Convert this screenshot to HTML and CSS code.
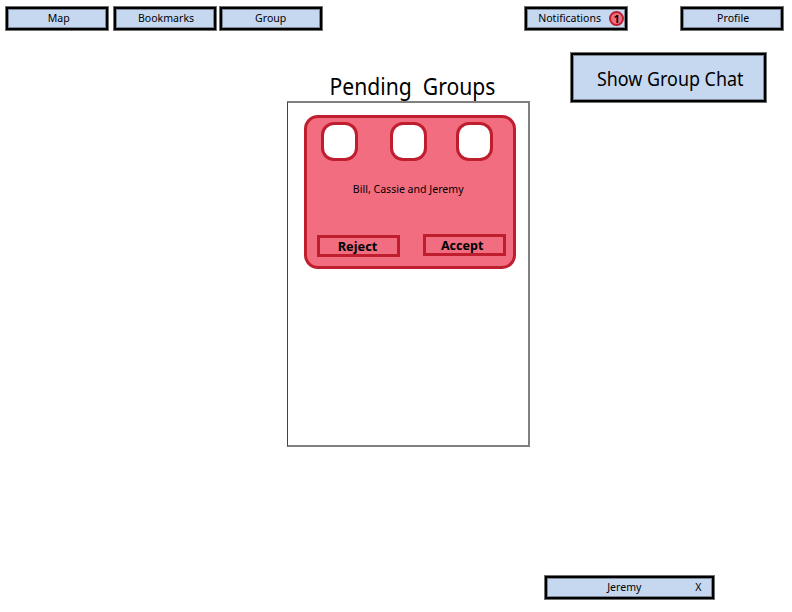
FILE: index.html
```html
<!DOCTYPE html>
<html lang="en">
<head>
<meta charset="utf-8">
<title>Pending Groups</title>
<link rel="stylesheet" href="styles.css">
</head>
<body>
<div class="screen">
  <nav class="nav">
    <button class="box tab map"><span>Map</span></button>
    <button class="box tab bookmarks"><span>Bookmarks</span></button>
    <button class="box tab group"><span>Group</span></button>
    <button class="box tab notifications"><span>Notifications</span><b class="badge">1</b></button>
    <button class="box tab profile"><span>Profile</span></button>
  </nav>
  <div class="main">
    <section class="pending">
      <h1><span>Pending&nbsp; Groups</span></h1>
      <div class="panel">
        <article class="card">
          <div class="avatars"><i class="avatar"></i><i class="avatar"></i><i class="avatar"></i></div>
          <p class="names"><span>Bill, Cassie and Jeremy</span></p>
          <div class="actions">
            <button class="action reject"><span>Reject</span></button>
            <button class="action accept"><span>Accept</span></button>
          </div>
        </article>
      </div>
    </section>
    <button class="box chat"><span>Show Group Chat</span></button>
  </div>
  <footer class="box tab dock"><span>Jeremy</span><span class="close">X</span></footer>
</div>
</body>
</html>
```
FILE: styles.css
```css
* { box-sizing: border-box; }
body { margin: 0; background: #fff; color: #000; font-family: "Noto Sans", sans-serif; }
button { font: inherit; color: inherit; padding: 0; margin: 0; }
span { display: inline-block; }
.screen { width: 792px; height: 612px; overflow: hidden; display: flex; flex-direction: column; }
.nav { display: flex; padding: 6px 0 0 5px; height: 32px; }
.box { display: flex; align-items: center; justify-content: center; background: #c6d8f0; border: 1px solid #6e7371; box-shadow: inset 0 0 0 2px #000, inset 0 0 0 3px #7c8896; white-space: nowrap; }
.tab { width: 104px; height: 25px; flex: none; padding-bottom: 2px; font-size: 11.3px; line-height: 15px; }
.tab > span { transform: scaleX(.935); }
.map { padding-left: 3px; }
.bookmarks { margin-left: 4px; padding-left: 2px; }
.group { margin-left: 2px; }
.notifications { margin-left: 201px; justify-content: flex-start; padding-left: 11px; }
.profile { margin-left: 52px; padding-left: 2px; }
.badge { width: 15px; height: 15px; margin: 2px 0 0 6px; border: 2px solid #be1e2d; border-radius: 50%; background: #f26d80; font-size: 11px; line-height: 11px; text-align: center; }
.main { display: flex; align-items: flex-start; height: 543px; }
.pending { width: 243px; margin: 38px 0 0 287px; }
h1 { margin: 0; padding-left: 8px; height: 31px; font-size: 22.8px; line-height: 34px; font-weight: 400; text-align: center; white-space: nowrap; }
h1 span { transform: scaleX(.927); }
.panel { height: 346px; border: 2px solid #808080; border-left: 1px solid #444; padding: 12px 0 0 16px; }
.card { width: 212px; height: 154px; background: #f26d80; border: 3px solid #be1e2d; border-radius: 14px; display: flex; flex-direction: column; }
.avatars { display: flex; padding: 4px 0 0 14px; }
.avatar { width: 37px; height: 39px; border: 3px solid #be1e2d; border-radius: 13px; background: #fff; }
.avatar + .avatar { margin-left: 32px; }
.avatar:last-child { margin-left: 29px; }
.names { margin: 19px 3px 0 0; font-size: 11.3px; line-height: 18px; text-align: center; }
.names span { transform: scaleX(.935); }
.actions { display: flex; margin-top: 36px; padding-left: 10px; }
.action { width: 83px; height: 22px; border: 3px solid #be1e2d; background: none; font-size: 12.8px; line-height: 14px; font-weight: 700; }
.action span { transform: translate(-1px, 0); }
.reject { margin-top: 1px; }
.accept { margin-left: 23px; }
.accept span { transform: translate(-2.5px, 0) scaleX(.98); }
.chat { width: 197px; height: 51px; margin: 20px 0 0 40px; padding: 2px 0 0 3px; font-size: 19.6px; }
.chat span { transform: scaleX(.913); }
.dock { width: 171px; margin-left: 544px; padding-right: 12px; justify-content: flex-end; }
.close { margin-left: 53px; }
```
